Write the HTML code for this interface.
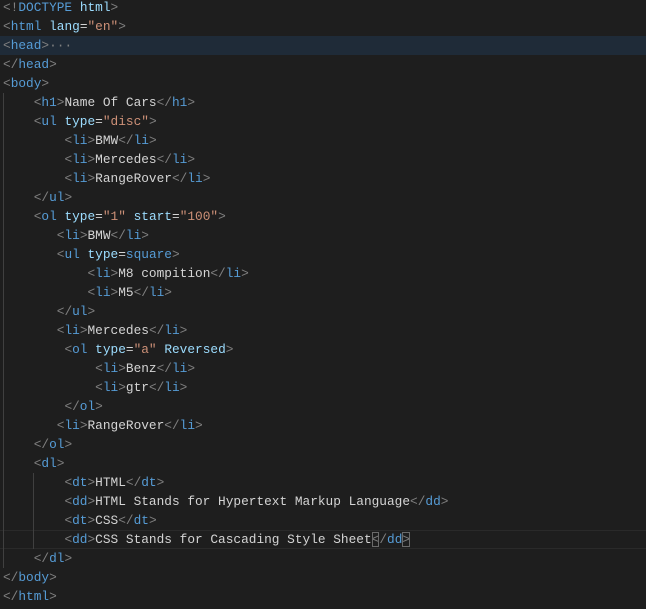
<!DOCTYPE html>
<html><head><style>
body{margin:0;background:#1e1e1e;width:646px;height:609px;overflow:hidden;position:relative}
pre{margin:0;position:absolute;left:3px;top:-2.5px;font-family:"Liberation Mono",monospace;font-size:12.8px;line-height:19px;color:#d4d4d4;white-space:pre}
.p{color:#808080}.t{color:#569cd6}.a{color:#9cdcfe}.s{color:#ce9178}
.hl{position:absolute;left:0;width:646px;height:19px;top:35.5px;background:#1f2b38}
.cur{position:absolute;left:0;width:646px;height:17px;top:529.5px;border-top:1px solid #2a2a2a;border-bottom:1px solid #2a2a2a}
.g{position:absolute;width:1px;background:#404040}
.br{outline:1px solid #6a6a6a;outline-offset:-1px}
</style></head><body>
<div class="hl"></div><div class="cur"></div>
<div class="g" style="left:3px;top:92.5px;height:475px"></div>
<div class="g" style="left:33px;top:472.5px;height:76px"></div>
<pre><span class="p">&lt;!</span><span class="t">DOCTYPE</span> <span class="a">html</span><span class="p">&gt;</span>
<span class="p">&lt;</span><span class="t">html</span> <span class="a">lang</span>=<span class="s">"en"</span><span class="p">&gt;</span>
<span class="p">&lt;</span><span class="t">head</span><span class="p">&gt;</span><span class="p">···</span>
<span class="p">&lt;/</span><span class="t">head</span><span class="p">&gt;</span>
<span class="p">&lt;</span><span class="t">body</span><span class="p">&gt;</span>
    <span class="p">&lt;</span><span class="t">h1</span><span class="p">&gt;</span>Name Of Cars<span class="p">&lt;/</span><span class="t">h1</span><span class="p">&gt;</span>
    <span class="p">&lt;</span><span class="t">ul</span> <span class="a">type</span>=<span class="s">"disc"</span><span class="p">&gt;</span>
        <span class="p">&lt;</span><span class="t">li</span><span class="p">&gt;</span>BMW<span class="p">&lt;/</span><span class="t">li</span><span class="p">&gt;</span>
        <span class="p">&lt;</span><span class="t">li</span><span class="p">&gt;</span>Mercedes<span class="p">&lt;/</span><span class="t">li</span><span class="p">&gt;</span>
        <span class="p">&lt;</span><span class="t">li</span><span class="p">&gt;</span>RangeRover<span class="p">&lt;/</span><span class="t">li</span><span class="p">&gt;</span>
    <span class="p">&lt;/</span><span class="t">ul</span><span class="p">&gt;</span>
    <span class="p">&lt;</span><span class="t">ol</span> <span class="a">type</span>=<span class="s">"1"</span> <span class="a">start</span>=<span class="s">"100"</span><span class="p">&gt;</span>
       <span class="p">&lt;</span><span class="t">li</span><span class="p">&gt;</span>BMW<span class="p">&lt;/</span><span class="t">li</span><span class="p">&gt;</span>
       <span class="p">&lt;</span><span class="t">ul</span> <span class="a">type</span>=<span class="t">square</span><span class="p">&gt;</span>
           <span class="p">&lt;</span><span class="t">li</span><span class="p">&gt;</span>M8 compition<span class="p">&lt;/</span><span class="t">li</span><span class="p">&gt;</span>
           <span class="p">&lt;</span><span class="t">li</span><span class="p">&gt;</span>M5<span class="p">&lt;/</span><span class="t">li</span><span class="p">&gt;</span>
       <span class="p">&lt;/</span><span class="t">ul</span><span class="p">&gt;</span>
       <span class="p">&lt;</span><span class="t">li</span><span class="p">&gt;</span>Mercedes<span class="p">&lt;/</span><span class="t">li</span><span class="p">&gt;</span>
        <span class="p">&lt;</span><span class="t">ol</span> <span class="a">type</span>=<span class="s">"a"</span> <span class="a">Reversed</span><span class="p">&gt;</span>
            <span class="p">&lt;</span><span class="t">li</span><span class="p">&gt;</span>Benz<span class="p">&lt;/</span><span class="t">li</span><span class="p">&gt;</span>
            <span class="p">&lt;</span><span class="t">li</span><span class="p">&gt;</span>gtr<span class="p">&lt;/</span><span class="t">li</span><span class="p">&gt;</span>
        <span class="p">&lt;/</span><span class="t">ol</span><span class="p">&gt;</span>
       <span class="p">&lt;</span><span class="t">li</span><span class="p">&gt;</span>RangeRover<span class="p">&lt;/</span><span class="t">li</span><span class="p">&gt;</span>
    <span class="p">&lt;/</span><span class="t">ol</span><span class="p">&gt;</span>
    <span class="p">&lt;</span><span class="t">dl</span><span class="p">&gt;</span>
        <span class="p">&lt;</span><span class="t">dt</span><span class="p">&gt;</span>HTML<span class="p">&lt;/</span><span class="t">dt</span><span class="p">&gt;</span>
        <span class="p">&lt;</span><span class="t">dd</span><span class="p">&gt;</span>HTML Stands for Hypertext Markup Language<span class="p">&lt;/</span><span class="t">dd</span><span class="p">&gt;</span>
        <span class="p">&lt;</span><span class="t">dt</span><span class="p">&gt;</span>CSS<span class="p">&lt;/</span><span class="t">dt</span><span class="p">&gt;</span>
        <span class="p">&lt;</span><span class="t">dd</span><span class="p">&gt;</span>CSS Stands for Cascading Style Sheet<span class="p br">&lt;</span><span class="p">/</span><span class="t">dd</span><span class="p br">&gt;</span>
    <span class="p">&lt;/</span><span class="t">dl</span><span class="p">&gt;</span>
<span class="p">&lt;/</span><span class="t">body</span><span class="p">&gt;</span>
<span class="p">&lt;/</span><span class="t">html</span><span class="p">&gt;</span></pre>
</body></html>
